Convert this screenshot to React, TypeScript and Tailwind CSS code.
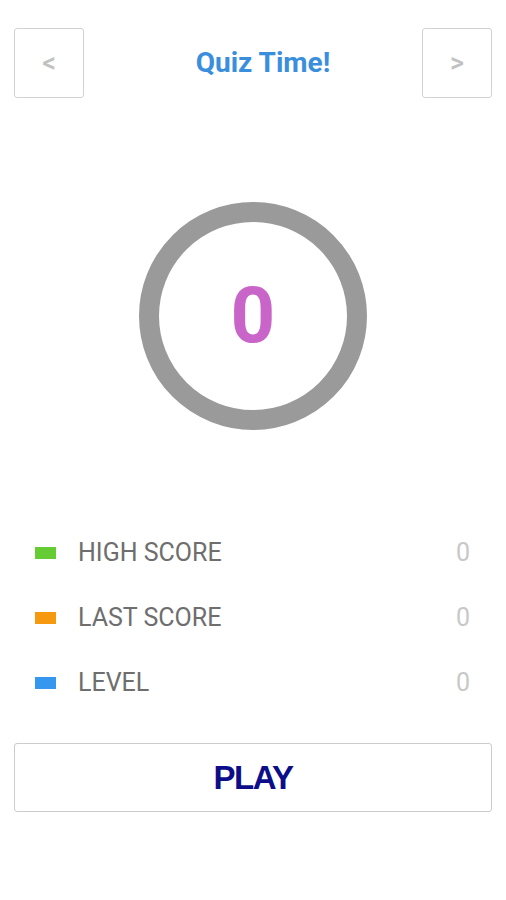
const stats = [
  { label: 'HIGH SCORE', color: 'bg-[#66cc33]', value: 0 },
  { label: 'LAST SCORE', color: 'bg-[#f7990f]', value: 0 },
  { label: 'LEVEL', color: 'bg-[#3597ee]', value: 0 },
];

export default function App() {
  return (
    <div className="min-h-[900px] w-[506px] bg-white px-[14px] pt-[28px] font-['Roboto',sans-serif]">
      <header className="flex h-[70px] items-center justify-between">
        <button className="flex h-[70px] w-[70px] items-center justify-center rounded-[3px] border border-[#d2d2d2] text-[27px] font-medium text-[#c2c2c2]">
          &lt;
        </button>
        <h1 className="ml-[20px] flex-1 text-center text-[28px] font-bold text-[#3a8ede]">Quiz Time!</h1>
        <button className="flex h-[70px] w-[70px] items-center justify-center rounded-[3px] border border-[#d2d2d2] text-[27px] font-medium text-[#c2c2c2]">
          &gt;
        </button>
      </header>

      <div className="mt-[104px] flex justify-center">
        <div className="flex h-[228px] w-[228px] items-center justify-center rounded-full border-[20px] border-[#9a9a9a]">
          <span className="text-[78px] font-bold leading-none text-[#c964c9]">0</span>
        </div>
      </div>

      <ul className="mt-[90px] flex flex-col">
        {stats.map((s) => (
          <li key={s.label} className="flex h-[65px] items-center pl-[21px] pr-[22px]">
            <span className={`h-[12px] w-[21px] ${s.color}`} />
            <span className="ml-[22px] flex-1 text-[25px] text-[#6e6e6e]">{s.label}</span>
            <span className="text-[25px] text-[#c8c8c8]">{s.value}</span>
          </li>
        ))}
      </ul>

      <button className="mt-[28px] flex h-[69px] w-full items-center justify-center rounded-[3px] border border-[#cccccc] font-['Liberation_Sans',sans-serif] text-[33px] font-bold tracking-[-1.5px] text-[#0d0d8a]">
        PLAY
      </button>
    </div>
  );
}
